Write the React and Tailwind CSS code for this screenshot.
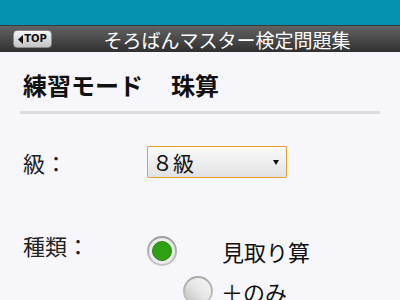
import React from "react";

const jp = { fontFamily: '"Noto Sans CJK JP", "Noto Sans", sans-serif' };

function Radio({ checked }) {
  if (checked) {
    return (
      <div className="w-[30px] h-[30px] rounded-full bg-gradient-to-b from-[#9c9c9c] to-[#c4c4c4] p-[2px] shrink-0">
        <div className="w-full h-full rounded-full bg-[#ececec] p-[3px]">
          <div className="w-full h-full rounded-full bg-[#2fa014] border border-[#238a0c]" />
        </div>
      </div>
    );
  }
  return (
    <div className="w-[30px] h-[30px] rounded-full bg-gradient-to-b from-[#a8a8a8] to-[#c8c8c8] p-[2px] shrink-0">
      <div className="w-full h-full rounded-full bg-gradient-to-tr from-[#bdbdbd] via-[#e6e6e6] to-[#f6f6f6]" />
    </div>
  );
}

export default function App() {
  return (
    <div className="w-[400px] h-[300px] overflow-hidden bg-[#f7f7fb]" style={jp}>
      <div className="h-[25px] bg-[#0591b0]" />
      <div className="h-[27px] bg-gradient-to-b from-[#626262] via-[#4a4a4a] to-[#303030] border-t border-[#3a3a3a] flex items-center pl-[13px]">
        <div className="w-[39px] h-[18px] rounded-[4px] bg-gradient-to-b from-[#f6f6f6] to-[#c4c4c4] border border-[#8a8a8a] flex items-center justify-center gap-[1px]">
          <svg width="5" height="9" viewBox="0 0 5 9"><path d="M5 0 L0 4.5 L5 9 Z" fill="#111" /></svg>
          <span className="text-[10px] font-bold text-[#111] leading-none" style={{ fontFamily: '"DejaVu Sans", sans-serif' }}>TOP</span>
        </div>
        <div className="flex-1 text-center text-white text-[19px] leading-[27px] whitespace-nowrap pl-[2px]">
          そろばんマスター検定問題集
        </div>
      </div>
      <div className="px-[20px]">
        <div className="mt-[18px] h-[30px] leading-[30px] pl-[3px] text-[24px] font-bold text-[#111] whitespace-nowrap flex">
          <span>練習モード</span>
          <span className="ml-[28px]">珠算</span>
        </div>
        <div className="mt-[11px] h-[3px] bg-[#dcdcdc]" />
        <div className="mt-[32px] flex items-center h-[32px]">
          <div className="w-[127px] pl-[3px] text-[22px] text-[#222] leading-[32px]">級：</div>
          <div className="w-[140px] h-[32px] rounded-[2px] border-[1.5px] border-[#e3a02a] bg-gradient-to-b from-[#fbfbfb] to-[#e2e2e2] flex items-center pl-[4px] pr-[7px]">
            <span className="flex-1 text-[21px] text-[#111] leading-none">８級</span>
            <svg width="6" height="5" viewBox="0 0 6 5"><path d="M0 0 L6 0 L3 5 Z" fill="#111" /></svg>
          </div>
        </div>
        <div className="mt-[58px] flex items-start">
          <div className="w-[127px] pl-[3px] text-[22px] text-[#222] leading-[30px] -mt-[6px]">種類：</div>
          <div className="flex flex-col gap-[10px]">
            <div className="flex items-center">
              <Radio checked />
              <span className="ml-[45px] text-[22px] text-[#111] leading-[30px] whitespace-nowrap">見取り算</span>
            </div>
            <div className="flex items-center pl-[36px]">
              <Radio />
              <span className="ml-[8px] text-[22px] text-[#111] leading-[30px] whitespace-nowrap">＋のみ</span>
            </div>
          </div>
        </div>
      </div>
    </div>
  );
}
